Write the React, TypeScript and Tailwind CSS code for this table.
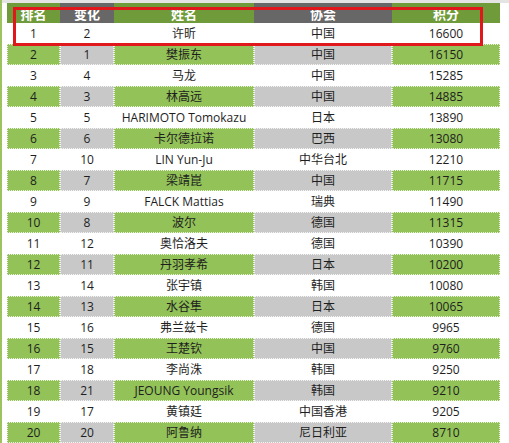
import React from "react";

type Row = [number, number, string, string, number];

const rows: Row[] = [
  [1, 2, "许昕", "中国", 16600],
  [2, 1, "樊振东", "中国", 16150],
  [3, 4, "马龙", "中国", 15285],
  [4, 3, "林高远", "中国", 14885],
  [5, 5, "HARIMOTO Tomokazu", "日本", 13890],
  [6, 6, "卡尔德拉诺", "巴西", 13080],
  [7, 10, "LIN Yun-Ju", "中华台北", 12210],
  [8, 7, "梁靖崑", "中国", 11715],
  [9, 9, "FALCK Mattias", "瑞典", 11490],
  [10, 8, "波尔", "德国", 11315],
  [11, 12, "奥恰洛夫", "德国", 10390],
  [12, 11, "丹羽孝希", "日本", 10200],
  [13, 14, "张宇镇", "韩国", 10080],
  [14, 13, "水谷隼", "日本", 10065],
  [15, 16, "弗兰兹卡", "德国", 9965],
  [16, 15, "王楚钦", "中国", 9760],
  [17, 18, "李尚洙", "韩国", 9250],
  [18, 21, "JEOUNG Youngsik", "韩国", 9210],
  [19, 17, "黄镇廷", "中国香港", 9205],
  [20, 20, "阿鲁纳", "尼日利亚", 8710],
];

const cols = "grid grid-cols-[53px_54px_140px_138px_108px]";

export default function App() {
  return (
    <div
      className="relative flex h-[443px] w-[509px] overflow-hidden bg-white text-[12px] text-[#1e1e1e]"
      style={{ fontFamily: '"Open Sans", "Noto Sans CJK SC", sans-serif' }}
    >
      <div className="w-[2px] shrink-0 bg-[#9cc35e]" />
      <div className="flex flex-1 flex-col">
        <div className="h-[4px] bg-[#e4e4e4]" />
        <div className="pl-[5px]">
          <div className={`${cols} h-[20px] text-[13px] font-bold leading-none text-white`}>
            <div className="flex items-center justify-center bg-[#6f9b3a] pt-[3px]">排名</div>
            <div className="flex items-center justify-center bg-[#676767] pt-[3px]">变化</div>
            <div className="flex items-center justify-center bg-[#6f9b3a] pt-[3px]">姓名</div>
            <div className="flex items-center justify-center bg-[#676767] pt-[3px]">协会</div>
            <div className="flex items-center justify-center bg-[#6f9b3a] pt-[3px]">积分</div>
          </div>
          {rows.map(([rank, prev, name, assoc, pts]) => {
            const even = rank % 2 === 0;
            const g = even ? "bg-[#92c258]" : "bg-white";
            const s = even ? "bg-[#c8c8c8]" : "bg-white";
            const cell = "flex items-center justify-center border border-dotted border-white/80";
            return (
              <div key={rank} className={`${cols} h-[21px]`}>
                <div className={`${cell} ${g}`}>{rank}</div>
                <div className={`${cell} ${s}`}>{prev}</div>
                <div className={`${cell} ${g}`}>{name}</div>
                <div className={`${cell} ${s}`}>{assoc}</div>
                <div className={`${cell} ${g}`}>{pts}</div>
              </div>
            );
          })}
        </div>
      </div>
      <div className="absolute left-[13px] top-[7px] h-[39px] w-[470px] border-[3px] border-[#e0181b]" />
    </div>
  );
}
